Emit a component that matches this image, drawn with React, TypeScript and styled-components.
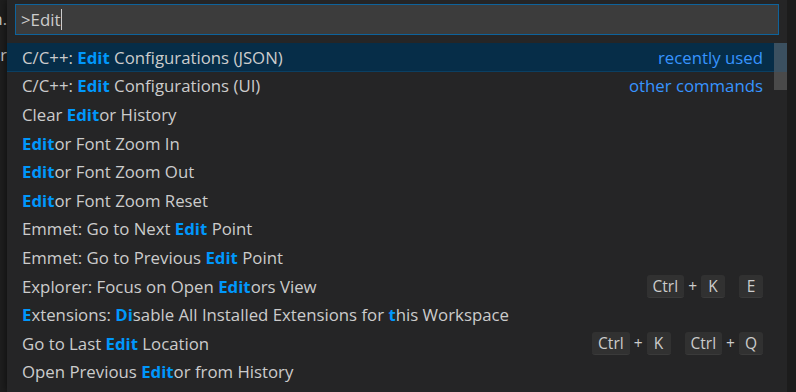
import React from "react";
import styled, { createGlobalStyle } from "styled-components";

const GlobalStyle = createGlobalStyle`
  html, body {
    margin: 0;
    padding: 0;
    background: #1e1e1e;
    overflow: hidden;
  }
  body {
    font-family: "Open Sans", "Noto Sans", sans-serif;
  }
`;

const Page = styled.div`
  display: flex;
  width: 796px;
  height: 392px;
  background: #1e1e1e;
`;

const EditorEdge = styled.div`
  width: 7px;
  overflow: hidden;
  display: flex;
  flex-direction: column;
  align-items: flex-end;
  padding-top: 7px;
  gap: 13px;
  color: #cccccc;
  font-size: 16.5px;
  white-space: nowrap;
`;

const Widget = styled.div`
  width: 780px;
  background: #252526;
  box-shadow: 0 0 8px rgba(0, 0, 0, 0.6);
  display: flex;
  flex-direction: column;
`;

const RightEdge = styled.div`
  flex: 1;
  background: #1c1c1c;
`;

const InputWrap = styled.div`
  padding: 4px 8px 8px 8px;
`;

const Input = styled.div`
  height: 29px;
  border: 1px solid #0e639c;
  background: #3c3c3c;
  color: #cccccc;
  font-size: 16.8px;
  display: flex;
  align-items: center;
  padding-left: 5px;
`;

const Caret = styled.span`
  display: inline-block;
  width: 1px;
  height: 21px;
  background: #cccccc;
  margin-left: 1px;
`;

const ListArea = styled.div`
  flex: 1;
  display: flex;
  overflow: hidden;
`;

const List = styled.div`
  flex: 1;
  display: flex;
  flex-direction: column;
`;

const Row = styled.div<{ $selected?: boolean }>`
  height: 28.6px;
  flex: none;
  display: flex;
  align-items: center;
  padding: 0 11px 0 15px;
  background: ${(p) => (p.$selected ? "#062d48" : "transparent")};
  box-shadow: ${(p) => (p.$selected ? "inset 0 -1px 0 #0b3f62" : "none")};
  color: #cccccc;
  font-size: 16.8px;
  white-space: nowrap;
`;

const Label = styled.span`
  flex: 1;
`;

const Hl = styled.span`
  color: #0097fb;
  font-weight: 700;
`;

const Desc = styled.span`
  color: #3794ff;
`;

const Keys = styled.div`
  display: flex;
  align-items: center;
  gap: 14px;
`;

const Chord = styled.div`
  display: flex;
  align-items: center;
  gap: 4px;
`;

const Cap = styled.span`
  min-width: 24px;
  height: 23px;
  box-sizing: border-box;
  padding: 0 6px;
  display: inline-flex;
  align-items: center;
  justify-content: center;
  background: #313131;
  border-bottom: 1px solid #3a3a3a;
  border-radius: 3px;
  color: #cccccc;
  font-size: 15.5px;
`;

const Plus = styled.span`
  color: #cccccc;
  font-size: 15.5px;
`;

const Scrollbar = styled.div`
  width: 13px;
  display: flex;
  flex-direction: column;
`;

const Thumb = styled.div<{ $h: number; $bg: string }>`
  height: ${(p) => p.$h}px;
  flex: none;
  background: ${(p) => p.$bg};
`;

type Seg = string | [string];

const Text = ({ segs }: { segs: Seg[] }) => (
  <Label>
    {segs.map((s, i) => (typeof s === "string" ? <span key={i}>{s}</span> : <Hl key={i}>{s[0]}</Hl>))}
  </Label>
);

const KeyCombo = ({ chords }: { chords: string[][] }) => (
  <Keys>
    {chords.map((c, i) => (
      <Chord key={i}>
        {c.map((k, j) => (
          <React.Fragment key={j}>
            {j > 0 && <Plus>+</Plus>}
            <Cap>{k}</Cap>
          </React.Fragment>
        ))}
      </Chord>
    ))}
  </Keys>
);

const rows: { segs: Seg[]; desc?: string; keys?: string[][] }[] = [
  { segs: ["C/C++: ", ["Edit"], " Configurations (JSON)"], desc: "recently used" },
  { segs: ["C/C++: ", ["Edit"], " Configurations (UI)"], desc: "other commands" },
  { segs: ["Clear ", ["Edit"], "or History"] },
  { segs: [["Edit"], "or Font Zoom In"] },
  { segs: [["Edit"], "or Font Zoom Out"] },
  { segs: [["Edit"], "or Font Zoom Reset"] },
  { segs: ["Emmet: Go to Next ", ["Edit"], " Point"] },
  { segs: ["Emmet: Go to Previous ", ["Edit"], " Point"] },
  { segs: ["Explorer: Focus on Open ", ["Edit"], "ors View"], keys: [["Ctrl", "K"], ["E"]] },
  {
    segs: [["E"], "xtensions: ", ["Di"], "sable All Installed Extensions for ", ["t"], "his Workspace"],
  },
  { segs: ["Go to Last ", ["Edit"], " Location"], keys: [["Ctrl", "K"], ["Ctrl", "Q"]] },
  { segs: ["Open Previous ", ["Edit"], "or from History"] },
];

const App = () => {
  return (
    <>
      <GlobalStyle />
      <Page>
        <EditorEdge>
          <span>n.</span>
          <span>ir</span>
        </EditorEdge>
        <Widget>
          <InputWrap>
            <Input>
              &gt;Edit
              <Caret />
            </Input>
          </InputWrap>
          <ListArea>
            <List>
              {rows.map((r, i) => (
                <Row key={i} $selected={i === 0}>
                  <Text segs={r.segs} />
                  {r.desc && <Desc>{r.desc}</Desc>}
                  {r.keys && <KeyCombo chords={r.keys} />}
                </Row>
              ))}
            </List>
            <Scrollbar>
              <Thumb $h={28.6} $bg="#3b5060" />
              <Thumb $h={18.4} $bg="#4a4a4a" />
            </Scrollbar>
          </ListArea>
        </Widget>
        <RightEdge />
      </Page>
    </>
  );
};

export default App;
